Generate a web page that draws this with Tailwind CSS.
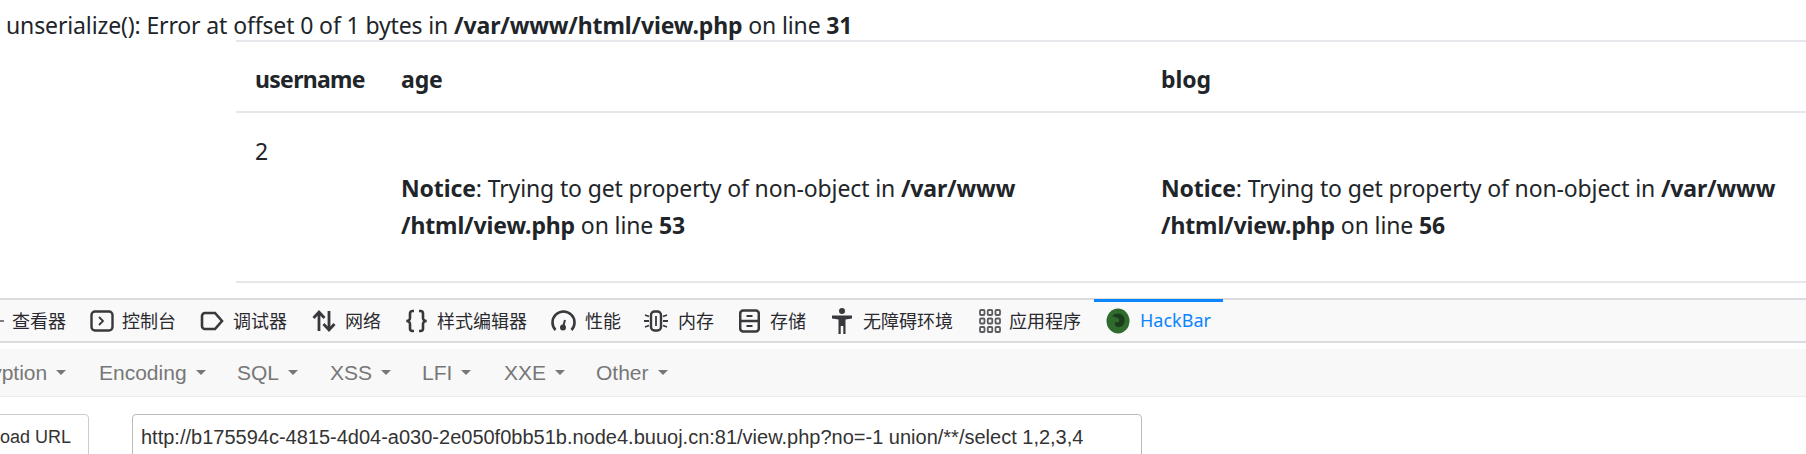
<!DOCTYPE html>
<html lang="zh-CN">
<head>
<meta charset="UTF-8">
<title>view.php</title>
<script src="https://cdn.jsdelivr.net/npm/@tailwindcss/browser@4"></script>
</head>
<body class="h-[454px] w-[1806px] overflow-hidden bg-white text-[#212529] font-['Noto_Sans',sans-serif]">

<!-- php warning -->
<div class="h-[40px] pl-[6px] pt-[9px] text-[23px] leading-[32px] tracking-[-0.13px] whitespace-nowrap">unserialize(): Error at offset 0 of 1 bytes in <b>/var/www/html/view.php</b> on line <b>31</b></div>

<!-- table -->
<div class="ml-[236px] h-[258px] text-[23px] leading-[37px] tracking-[-0.13px]">
  <div class="flex h-[73px] border-y-2 border-[#e6e7ea] font-bold items-center pt-[5px]">
    <div class="w-[146px] pl-[19px] tracking-[-0.7px]">username</div>
    <div class="w-[760px] pl-[19px]">age</div>
    <div class="pl-[19px]">blog</div>
  </div>
  <div class="flex h-[170px] border-b-2 border-[#e6e7ea] pt-[20px]">
    <div class="w-[146px] pl-[19px]">2</div>
    <div class="w-[760px] pl-[19px] pt-[37px]"><b>Notice</b>: Trying to get property of non-object in <b>/var/www<br>/html/view.php</b> on line <b>53</b></div>
    <div class="pl-[19px] pt-[37px]"><b>Notice</b>: Trying to get property of non-object in <b>/var/www<br>/html/view.php</b> on line <b>56</b></div>
  </div>
</div>

<!-- devtools tab bar -->
<div class="flex h-[45px] items-stretch border-y-2 border-y-[#dcdcde] bg-[#f9f9fa] text-[18px] text-[#2a2a2e] font-['Noto_Sans_CJK_SC','Noto_Sans',sans-serif] whitespace-nowrap">
  <div class="flex items-center w-[90px]">
    <svg class="w-[4px] h-[4px] mr-[8px]" viewBox="0 0 4 4"><path d="M0 2h4" stroke="#555" stroke-width="1.500"/></svg>
    <span>查看器</span>
  </div>
  <div class="flex items-center gap-[8px] w-[110px]">
    <svg class="w-[24px] h-[24px]" viewBox="0 0 24 24" fill="none" stroke="#38383d" stroke-width="2.400"><rect x="1.500" y="2.500" width="21" height="19" rx="3.500"/><path d="M9 8l4 4-4 4" stroke-width="1.800"/></svg>
    <span>控制台</span>
  </div>
  <div class="flex items-center gap-[9px] w-[112px]">
    <svg class="w-[24px] h-[24px]" viewBox="0 0 24 24" fill="none" stroke="#38383d" stroke-width="2.600"><path d="M5 4h10l7 8-7 8H5a3 3 0 0 1-3-3V7a3 3 0 0 1 3-3z"/></svg>
    <span>调试器</span>
  </div>
  <div class="flex items-center gap-[9px] w-[93px]">
    <svg class="w-[24px] h-[24px]" viewBox="0 0 24 24" fill="none" stroke="#38383d" stroke-width="2.800"><path d="M7 22V3M1.500 9L7 3l5.500 6M17 2v19M11.500 15l5.500 6 5.500-6"/></svg>
    <span>网络</span>
  </div>
  <div class="flex items-center gap-[9px] w-[146px]">
    <svg class="w-[23px] h-[24px]" viewBox="0 0 23 24" fill="none" stroke="#38383d" stroke-width="2.600"><path d="M9 2H7.500A2.500 2.500 0 0 0 5 4.500V9a3 3 0 0 1-3.500 3A3 3 0 0 1 5 15v4.500A2.500 2.500 0 0 0 7.500 22H9M14 2h1.500A2.500 2.500 0 0 1 18 4.500V9a3 3 0 0 0 3.500 3 3 3 0 0 0-3.500 3v4.500a2.500 2.500 0 0 1-2.500 2.500H14"/></svg>
    <span>样式编辑器</span>
  </div>
  <div class="flex items-center gap-[9px] w-[93px]">
    <svg class="w-[25px] h-[24px]" viewBox="0 0 25 24" fill="none" stroke="#38383d" stroke-width="2.600"><path d="M4.500 21a11 11 0 1 1 16 0"/><path d="M12 18l2-7" stroke-width="2"/><circle cx="12" cy="18.500" r="3" fill="#38383d" stroke="none"/></svg>
    <span>性能</span>
  </div>
  <div class="flex items-center gap-[10px] w-[95px]">
    <svg class="w-[24px] h-[24px]" viewBox="0 0 24 24" fill="none" stroke="#38383d" stroke-width="2.400"><rect x="7" y="2.500" width="10" height="19" rx="3.500"/><path d="M12 7v10" stroke-width="1.800"/><path d="M1 6l4 1.500M0 12h5M1 18l4-1.500M23 6l-4 1.500M24 12h-5M23 18l-4-1.500" stroke-width="1.800"/></svg>
    <span>内存</span>
  </div>
  <div class="flex items-center gap-[10px] w-[92px]">
    <svg class="w-[21px] h-[24px]" viewBox="0 0 21 24" fill="none" stroke="#38383d" stroke-width="2.500"><rect x="1.200" y="1.500" width="18.600" height="21" rx="3"/><path d="M1 12h19"/><path d="M7.500 7h6M7.500 17h6" stroke-width="2"/></svg>
    <span>存储</span>
  </div>
  <div class="flex items-center gap-[10px] w-[148px]">
    <svg class="w-[22px] h-[26px]" viewBox="0 0 22 26" fill="#38383d"><circle cx="11" cy="3" r="3"/><path d="M1 7.500h20v3l-6.500 1V26h-2.200v-8h-2.600v8H7.500V11.500L1 10.500z"/></svg>
    <span>无障碍环境</span>
  </div>
  <div class="flex items-center gap-[8px] w-[115px]">
    <svg class="w-[22px] h-[24px]" viewBox="0 0 22 24" fill="none" stroke="#5b5b60" stroke-width="1.800"><rect x="1" y="1" width="4.500" height="5" rx="1"/><rect x="8.750" y="1" width="4.500" height="5" rx="1"/><rect x="16.500" y="1" width="4.500" height="5" rx="1"/><rect x="1" y="9.500" width="4.500" height="5" rx="1"/><rect x="8.750" y="9.500" width="4.500" height="5" rx="1"/><rect x="16.500" y="9.500" width="4.500" height="5" rx="1"/><rect x="1" y="18" width="4.500" height="5" rx="1"/><rect x="8.750" y="18" width="4.500" height="5" rx="1"/><rect x="16.500" y="18" width="4.500" height="5" rx="1"/></svg>
    <span>应用程序</span>
  </div>
  <div class="relative flex items-center gap-[10px] w-[129px] pl-[12px] text-[#0a84ff] font-['Noto_Sans',sans-serif] text-[18px]">
    <span class="absolute left-0 right-0 top-[-1px] h-[3px] bg-[#0a84ff]"></span>
    <svg class="w-[24px] h-[26px]" viewBox="0 0 24 26"><ellipse cx="12" cy="13" rx="11.500" ry="12.500" fill="#2f6b2c"/><path d="M6 8c4-4 10-3 12 1 2 5-1 10-5 10-3 0-5-2-4-5 3 1 5 0 4-3-2-2-5-2-7-3z" fill="#1c3d1c"/></svg>
    <span>HackBar</span>
  </div>
</div>

<!-- hackbar menu -->
<div class="mt-[6px] ml-[-52px] flex items-center h-[48px] bg-[#f8f8f8] border-b border-[#ececec] pr-[52px] text-[21px] text-[#777] font-['Liberation_Sans',sans-serif] whitespace-nowrap">
  <span class="flex items-center w-[151px]">Encryption<i class="ml-[9px] w-0 h-0 border-x-[5px] border-x-transparent border-t-[5px] border-t-[#777]"></i></span>
  <span class="flex items-center w-[138px]">Encoding<i class="ml-[9px] w-0 h-0 border-x-[5px] border-x-transparent border-t-[5px] border-t-[#777]"></i></span>
  <span class="flex items-center w-[93px]">SQL<i class="ml-[9px] w-0 h-0 border-x-[5px] border-x-transparent border-t-[5px] border-t-[#777]"></i></span>
  <span class="flex items-center w-[92px]">XSS<i class="ml-[9px] w-0 h-0 border-x-[5px] border-x-transparent border-t-[5px] border-t-[#777]"></i></span>
  <span class="flex items-center w-[82px]">LFI<i class="ml-[9px] w-0 h-0 border-x-[5px] border-x-transparent border-t-[5px] border-t-[#777]"></i></span>
  <span class="flex items-center w-[92px]">XXE<i class="ml-[9px] w-0 h-0 border-x-[5px] border-x-transparent border-t-[5px] border-t-[#777]"></i></span>
  <span class="flex items-center">Other<i class="ml-[9px] w-0 h-0 border-x-[5px] border-x-transparent border-t-[5px] border-t-[#777]"></i></span>
</div>

<!-- load url and input -->
<div class="mt-[17px] ml-[-30px] flex gap-[43px] font-['Liberation_Sans',sans-serif] text-[18px] text-[#333]">
  <div class="w-[119px] h-[60px] shrink-0 rounded-[4px] border border-[#ccc] pt-[9px] pl-[2px] text-center">Load URL</div>
  <div class="w-[1010px] h-[60px] shrink-0 rounded-[4px] border border-[#bbb] pl-[8px] pt-[7px] text-[20px] whitespace-nowrap">http://b175594c-4815-4d04-a030-2e050f0bb51b.node4.buuoj.cn:81/view.php?no=-1 union/**/select 1,2,3,4</div>
</div>

</body>
</html>
